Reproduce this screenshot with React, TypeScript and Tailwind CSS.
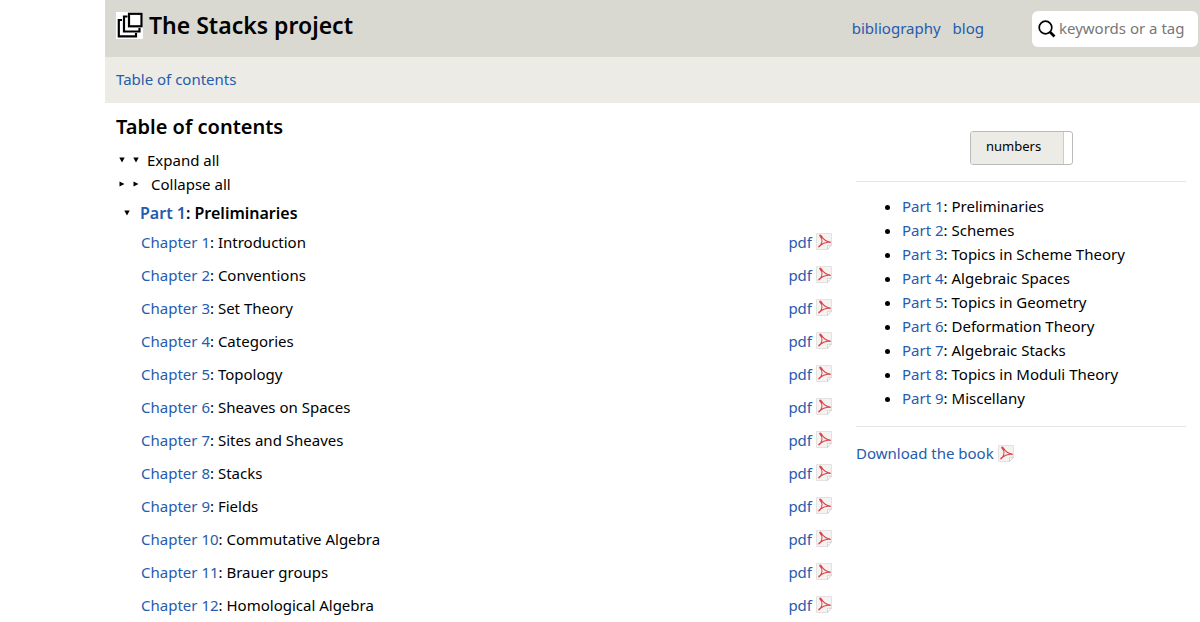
import clsx from "clsx"

const parts = [
    "Preliminaries",
    "Schemes",
    "Topics in Scheme Theory",
    "Algebraic Spaces",
    "Topics in Geometry",
    "Deformation Theory",
    "Algebraic Stacks",
    "Topics in Moduli Theory",
    "Miscellany",
]

const chapters = [
    "Introduction",
    "Conventions",
    "Set Theory",
    "Categories",
    "Topology",
    "Sheaves on Spaces",
    "Sites and Sheaves",
    "Stacks",
    "Fields",
    "Commutative Algebra",
    "Brauer groups",
    "Homological Algebra",
]

function Logo() {
    return (
        <svg viewBox="0 0 27 27" className="w-[27px] h-[27px] shrink-0" aria-hidden="true">
            <rect width="27" height="27" fill="#fff" />
            <g fill="none" stroke="#000" strokeWidth="2.200">
                <rect x="13" y="1.800" width="12.500" height="12.500" />
                <path d="M11.500 4.500H8V19.500H23.500V16" />
                <path d="M6 8H2.800V24.300H20V21" />
            </g>
        </svg>
    )
}

function SearchIcon() {
    return (
        <svg viewBox="0 0 18 18" className="w-[18px] h-[18px] shrink-0" fill="none" stroke="#000" aria-hidden="true">
            <circle cx="7.500" cy="7.500" r="6.300" strokeWidth="1.700" />
            <path d="M12 12L16.500 16.500" strokeWidth="2.600" />
        </svg>
    )
}

function PdfIcon() {
    return (
        <svg viewBox="0 0 16 17" className="w-4 h-[17px] shrink-0" fill="none" aria-hidden="true">
            <path d="M.5 .5H15.500V12L11.500 16.500H.5Z" fill="#f4f3f2" stroke="#e4e2e0" />
            <path d="M15.500 12L11.500 16.500V12.500Z" fill="#fff" stroke="#c9c7c5" strokeWidth=".7" />
            <path
                d="M4 2.200C5 1.700 5.500 3.500 7 5.300C8.700 7.300 10.800 8.700 13.800 9.300C14.800 9.500 14.300 8.800 12.800 9C9 9.400 6 10.700 3.300 13C2.300 14 3 14.300 4 13C6.300 10 6.700 6 4.300 3.300C3.800 2.900 3.500 2.500 4 2.200Z"
                stroke="#dc4148"
                strokeWidth="1.200"
            />
        </svg>
    )
}

function Arrow({ open = false }: { open?: boolean }) {
    return (
        <svg viewBox="0 0 6 6" className="w-[6px] h-[6px] shrink-0" aria-hidden="true">
            <path d={open ? "M.3 .5H5.700L3 5.500Z" : "M.5 .5V5.500L5.500 3Z"} />
        </svg>
    )
}

function Link({ children, className }: { children: React.ReactNode; className?: string }) {
    return (
        <a href="#" className={clsx("text-[#265bae] hover:underline", className)}>
            {children}
        </a>
    )
}

export default function App() {
    return (
        <div className="pl-[105px] bg-white text-black text-[15px] leading-6 font-['Droid_Sans','Noto_Sans',sans-serif]">
            <header className="bg-[#d9d8d1] flex items-center pl-[11px] pr-[2px] pt-[11px] pb-[10px]">
                <h1 className="flex grow items-center gap-[6px] pb-2 text-[23px] leading-7 font-semibold">
                    <Logo />
                    The Stacks project
                </h1>
                <nav className="flex gap-3 mr-12 pb-[2px]">
                    <Link>bibliography</Link>
                    <Link>blog</Link>
                </nav>
                <label className="flex items-center gap-[3px] w-[166px] h-9 pl-[6px] rounded-md bg-white">
                    <SearchIcon />
                    <input
                        type="text"
                        aria-label="Search"
                        placeholder="keywords or a tag"
                        className="w-full min-w-0 pb-[2px] outline-none placeholder:text-[#777]"
                    />
                </label>
            </header>

            <nav className="bg-[#ecebe5] px-[11px] pt-[10px] pb-3">
                <Link>Table of contents</Link>
            </nav>

            <div className="flex gap-6 pl-[11px] pr-[14px]">
                <main className="grow">
                    <h2 className="pt-2 text-xl leading-8 font-semibold">Table of contents</h2>
                    <button type="button" className="flex items-center mt-[5px] pl-[3px]">
                        <span className="flex gap-2 mr-2">
                            <Arrow open />
                            <Arrow open />
                        </span>
                        Expand all
                    </button>
                    <button type="button" className="flex items-center pl-[3px]">
                        <span className="flex gap-2 mr-3">
                            <Arrow />
                            <Arrow />
                        </span>
                        Collapse all
                    </button>
                    <h3 className="flex items-center gap-[10px] mt-[5px] pl-2 text-base font-semibold">
                        <Arrow open />
                        <span>
                            <Link>Part 1</Link>: Preliminaries
                        </span>
                    </h3>
                    <ul className="pl-[25px]">
                        {chapters.map((title, i) => (
                            <li key={title} className="flex h-[33px] items-center justify-between">
                                <span>
                                    <Link>Chapter {i + 1}</Link>: {title}
                                </span>
                                <Link className="flex items-center gap-1">
                                    pdf <PdfIcon />
                                </Link>
                            </li>
                        ))}
                    </ul>
                </main>

                <aside className="w-[330px] shrink-0 pt-7">
                    <button
                        type="button"
                        className="flex ml-[114px] w-[103px] h-[34px] rounded-[3px] border border-[#bbb] bg-white text-[13px] leading-7"
                    >
                        <span className="w-[93px] h-full pl-[15px] text-left rounded-l-[2px] border-r border-[#ccc] bg-[#ecebe5]">
                            numbers
                        </span>
                    </button>
                    <hr className="mt-4 border-[#e5e5e5]" />
                    <ul className="list-disc pl-[46px] pt-3 pb-4">
                        {parts.map((title, i) => (
                            <li key={title}>
                                <Link>Part {i + 1}</Link>: {title}
                            </li>
                        ))}
                    </ul>
                    <hr className="border-[#e5e5e5]" />
                    <Link className="flex items-center gap-1 mt-[14px]">
                        Download the book <PdfIcon />
                    </Link>
                </aside>
            </div>
        </div>
    )
}
